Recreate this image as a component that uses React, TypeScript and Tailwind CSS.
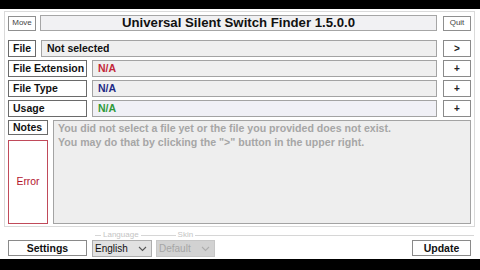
import React from "react";

const FONT = { fontFamily: '"Liberation Sans", Arial, sans-serif' };

const Chevron: React.FC<{ color: string }> = ({ color }) => (
  <svg width="9" height="6" viewBox="0 0 9 6" fill="none">
    <polyline points="1,1 4.5,4.5 8,1" stroke={color} strokeWidth="1.1" />
  </svg>
);

const SideButton: React.FC<{ label: string }> = ({ label }) => (
  <div className="w-[28px] h-[17px] shrink-0 bg-white border border-[#8a8a8a] flex items-center justify-center text-[10px] font-bold text-[#222] leading-none">
    {label}
  </div>
);

const Row: React.FC<{
  label: string;
  labelW: string;
  value: string;
  valueColor: string;
  button: string;
  valueBg?: string;
}> = ({ label, labelW, value, valueColor, button, valueBg = "bg-[#efefef]" }) => (
  <div className="flex items-center gap-[5px] h-[17px]">
    <div
      className={`${labelW} h-[17px] shrink-0 bg-white border border-[#6a6a6a] flex items-center pl-[4px] text-[10.5px] font-bold text-[#111] leading-none`}
    >
      {label}
    </div>
    <div
      className={`flex-1 h-[17px] mr-[1px] ${valueBg} border border-[#a3a3a3] flex items-center pl-[5px] text-[10.5px] font-bold leading-none ${valueColor}`}
    >
      {value}
    </div>
    <SideButton label={button} />
  </div>
);

const App: React.FC = () => {
  return (
    <div className="w-[480px] h-[270px] bg-black flex flex-col" style={FONT}>
      <div className="h-[9px] shrink-0" />
      <div className="h-[250px] shrink-0 bg-white flex flex-col pt-[2px]">
        {/* main frame */}
        <div className="ml-[4px] mr-[5px] h-[216px] border border-[#dadada] pt-[3px] px-[3px] pb-[2px] flex flex-col">
          {/* title row */}
          <div className="flex items-center h-[16px] gap-[4px]">
            <div className="w-[28px] h-[15px] shrink-0 bg-white border border-[#8f8f8f] flex items-center justify-center text-[8px] text-[#444] leading-none">
              Move
            </div>
            <div className="flex-1 h-[16px] mr-[2px] bg-[#f1f1f3] border border-[#a6a6a6] flex items-center justify-center text-[13.2px] font-bold text-[#111] leading-none">
              Universal Silent Switch Finder 1.5.0.0
            </div>
            <div className="w-[28px] h-[15px] shrink-0 bg-white border border-[#8f8f8f] flex items-center justify-center text-[8px] text-[#444] leading-none">
              Quit
            </div>
          </div>

          <div className="mt-[9px] flex flex-col gap-[3px]">
            <Row label="File" labelW="w-[28px]" value="Not selected" valueColor="text-[#111]" button=">" />
            <Row label="File Extension" labelW="w-[79px]" value="N/A" valueColor="text-[#c3283a]" button="+" />
            <Row label="File Type" labelW="w-[79px]" value="N/A" valueColor="text-[#1e2a86]" button="+" />
            <Row label="Usage" labelW="w-[79px]" value="N/A" valueColor="text-[#2e9a3a]" button="+" valueBg="bg-[#f0f0f6]" />
          </div>

          {/* notes */}
          <div className="mt-[3px] flex gap-[5px] h-[104px]">
            <div className="w-[40px] shrink-0 flex flex-col gap-[5px]">
              <div className="h-[15px] bg-white border border-[#6a6a6a] flex items-center pl-[4px] text-[10.5px] font-bold text-[#111] leading-none">
                Notes
              </div>
              <div className="h-[84px] bg-white border border-[#c04a5a] flex items-center justify-center text-[10.4px] text-[#b3142e] leading-none">
                Error
              </div>
            </div>
            <div className="flex-1 bg-[#eeeeee] border border-[#a3a3a3] px-[4px] pt-[1px] text-[10.6px] font-bold text-[#a6a6a6] leading-[13.5px]">
              <div>You did not select a file yet or the file you provided does not exist.</div>
              <div>You may do that by clicking the "&gt;" button in the upper right.</div>
            </div>
          </div>
        </div>

        {/* legend line */}
        <div className="mt-[4px] h-[8px] flex items-center pl-[95px] pr-[6px] text-[8px] text-[#c4c4c4] leading-none">
          <div className="w-[6px] h-px bg-[#d6d6d6]" />
          <span className="px-[2px]">Language</span>
          <div className="w-[35px] h-px bg-[#d6d6d6]" />
          <span className="px-[2px]">Skin</span>
          <div className="flex-1 h-px bg-[#d6d6d6]" />
        </div>

        {/* bottom row */}
        <div className="mt-[1px] flex items-start pl-[8px] pr-[9px]">
          <div className="w-[79px] h-[16px] bg-white border border-[#8a8a8a] flex items-center justify-center text-[10.5px] font-bold text-[#111] leading-none">
            Settings
          </div>
          <div className="ml-[5px] w-[60px] h-[17px] bg-[#e1e1e1] border border-[#adadad] flex items-center justify-between pl-[2px] pr-[4px] text-[10px] text-[#111] leading-none">
            <span>English</span>
            <Chevron color="#555" />
          </div>
          <div className="ml-[4px] w-[59px] h-[17px] bg-[#d2d2d2] border border-[#c6c6c6] flex items-center justify-between pl-[2px] pr-[4px] text-[10px] text-[#a6a6a6] leading-none">
            <span>Default</span>
            <Chevron color="#adadad" />
          </div>
          <div className="flex-1" />
          <div className="w-[59px] h-[16px] bg-white border border-[#8a8a8a] flex items-center justify-center text-[10.5px] font-bold text-[#111] leading-none">
            Update
          </div>
        </div>
      </div>
      <div className="flex-1 bg-black" />
    </div>
  );
};

export default App;
